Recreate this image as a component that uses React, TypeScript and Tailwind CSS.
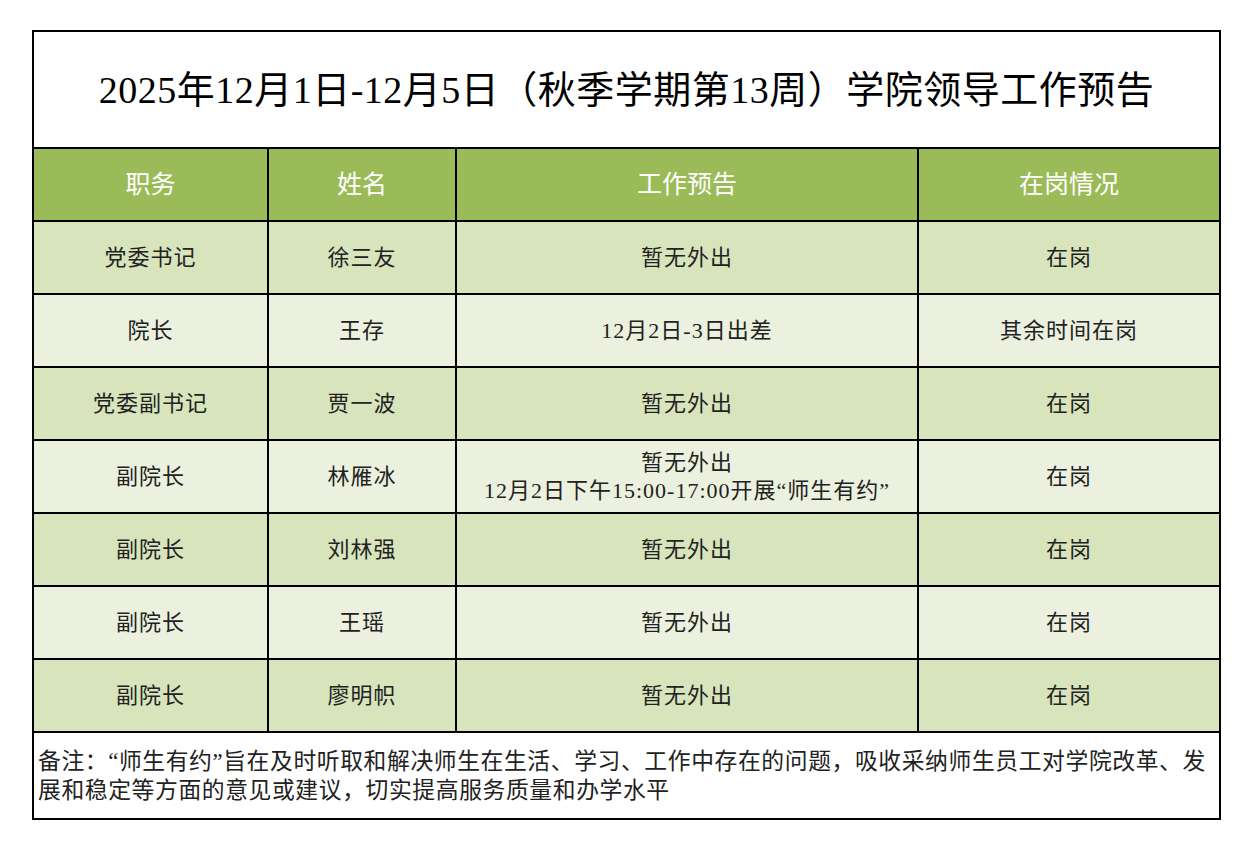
const rows = [
  { role: "党委书记", name: "徐三友", plan: ["暂无外出"], status: "在岗" },
  { role: "院长", name: "王存", plan: ["12月2日-3日出差"], status: "其余时间在岗" },
  { role: "党委副书记", name: "贾一波", plan: ["暂无外出"], status: "在岗" },
  {
    role: "副院长",
    name: "林雁冰",
    plan: ["暂无外出", "12月2日下午15:00-17:00开展“师生有约”"],
    status: "在岗"
  },
  { role: "副院长", name: "刘林强", plan: ["暂无外出"], status: "在岗" },
  { role: "副院长", name: "王瑶", plan: ["暂无外出"], status: "在岗" },
  { role: "副院长", name: "廖明帜", plan: ["暂无外出"], status: "在岗" }
];

const font = "font-['Liberation_Serif','Noto_Sans_CJK_SC',serif]";

export default function App() {
  return (
    <div className={`min-h-screen bg-white pt-[30px] pl-[32px] ${font}`}>
      <table className="w-[1187px] border-collapse border-2 border-black table-fixed">
        <colgroup>
          <col className="w-[235px]" />
          <col className="w-[188px]" />
          <col className="w-[462px]" />
          <col className="w-[302px]" />
        </colgroup>
        <tbody>
          <tr className="h-[117px]">
            <td colSpan={4} className="border-2 border-black text-center text-[38px] tracking-[0.5px] text-black leading-none">
              2025年12月1日-12月5日（秋季学期第13周）学院领导工作预告
            </td>
          </tr>
          <tr className="h-[73px] bg-[#9bbb59] text-white text-[25px]">
            <td className="border-2 border-black text-center">职务</td>
            <td className="border-2 border-black text-center">姓名</td>
            <td className="border-2 border-black text-center">工作预告</td>
            <td className="border-2 border-black text-center">在岗情况</td>
          </tr>
          {rows.map((r, i) => (
            <tr
              key={i}
              className={`h-[73px] text-[22px] tracking-[1px] text-[#222] leading-[28px] ${
                i % 2 === 0 ? "bg-[#d8e4bc]" : "bg-[#ebf1de]"
              }`}
            >
              <td className="border-2 border-black text-center">{r.role}</td>
              <td className="border-2 border-black text-center">{r.name}</td>
              <td className="border-2 border-black text-center">
                {r.plan.map((p) => (
                  <div key={p}>{p}</div>
                ))}
              </td>
              <td className="border-2 border-black text-center">{r.status}</td>
            </tr>
          ))}
          <tr className="h-[87px]">
            <td colSpan={4} className="border-2 border-black align-top pt-[14px] px-[4px] text-[22.8px] tracking-[0.6px] leading-[29px] text-[#222]">
              备注：“师生有约”旨在及时听取和解决师生在生活、学习、工作中存在的问题，吸收采纳师生员工对学院改革、发
              <br />
              展和稳定等方面的意见或建议，切实提高服务质量和办学水平
            </td>
          </tr>
        </tbody>
      </table>
    </div>
  );
}
